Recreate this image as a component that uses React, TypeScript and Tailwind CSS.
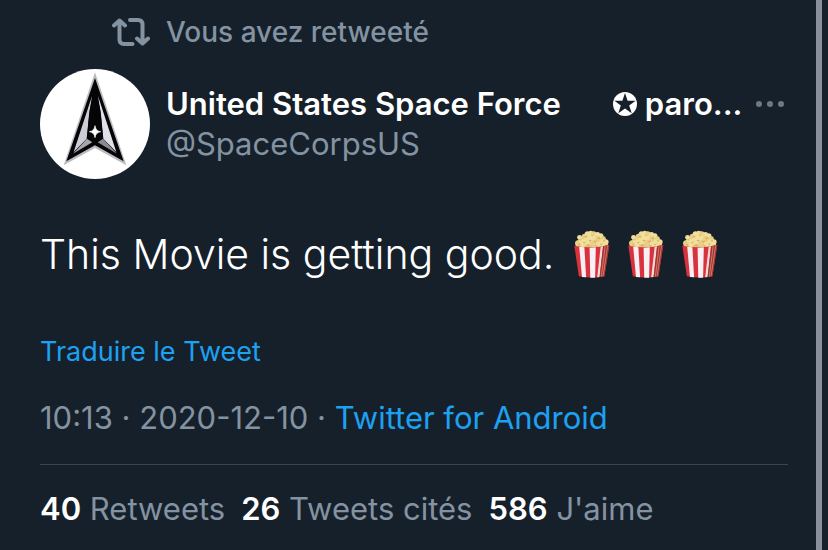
type IconProps = {
  className?: string;
};

type Stat = {
  count: number;
  label: string;
};

const stats: Stat[] = [
  { count: 40, label: 'Retweets' },
  { count: 26, label: 'Tweets cités' },
  { count: 586, label: "J'aime" },
];

const RetweetIcon = ({ className }: IconProps) => (
  <svg
    className={className}
    viewBox="0 0 38 28"
    fill="none"
    stroke="currentColor"
    strokeWidth="4"
    strokeLinecap="round"
    strokeLinejoin="round"
    aria-hidden="true"
  >
    <path d="M2 7.500 7.500 2.500 13 7.500M7.500 4V21.500Q7.500 26 12 26H20.500" />
    <path d="M18 2H26Q30.500 2 30.500 6.500V24M25 20.500 30.500 25.500 36 20.500" />
  </svg>
);

const SpaceForceLogo = ({ className }: IconProps) => (
  <svg className={className} viewBox="30 27 330 330" role="img" aria-label="United States Space Force">
    <circle cx="195" cy="192" r="165" fill="#fff" />
    <path d="M195 37 101 316 195 264 289 316Z" fill="#bcbbc0" />
    <path d="M195 54 109 304 195 256 281 304Z" fill="#050507" />
    <path d="M186 108 131 276 170 236 177 165Z" fill="#cdcdd8" />
    <path d="M204 108 259 276 220 236 213 165Z" fill="#e0e0ea" />
    <path d="M129 281 171 236 187 247Z" fill="#a5a5ad" />
    <path d="M261 281 219 236 203 247Z" fill="#8b8b93" />
    <path d="M195 80 179 150 171 235 195 249 219 235 211 150Z" fill="#050507" />
    <path d="M195 197Q197 213 212 215 197 217 195 233 193 217 178 215 193 213 195 197Z" fill="#fff" stroke="#fff" strokeWidth="2" />
  </svg>
);

const kernels = [
  [43, 70, 9], [54, 60, 9], [47, 52, 7], [62, 50, 9], [70, 42, 8], [79, 38, 6],
  [88, 42, 8], [99, 43, 7], [108, 48, 8], [116, 56, 7], [123, 66, 8], [112, 68, 10],
  [98, 57, 10], [82, 53, 11], [70, 64, 11], [88, 70, 11], [56, 73, 8], [102, 73, 8],
];

const flecks = [
  [50, 58], [61, 67], [66, 48], [77, 61], [84, 45], [93, 64], [103, 54], [110, 72], [118, 62], [47, 73], [72, 74], [96, 76],
];

const PopcornEmoji = ({ className }: IconProps) => (
  <svg className={className} viewBox="31 30 104 144" preserveAspectRatio="none" role="img" aria-label="Pop-corn">
    <path d="M36 76Q38 52 68 42L83 34 103 42Q126 52 130 76V86H36Z" fill="#dfc376" />
    {kernels.map(([x, y, r], i) => (
      <circle key={i} cx={x} cy={y} r={r} fill={i % 3 === 0 ? '#e8cf83' : '#f3df9c'} />
    ))}
    {flecks.map(([x, y], i) => (
      <path key={i} d={`M${x - 3} ${y}q3 4 6-1`} stroke="#b8873c" strokeWidth="2" fill="none" />
    ))}
    <path d="M32 77Q82 87 133 75L119 169Q84 176 45 169Z" fill="#d8323c" />
    <path d="M46 80 61 82 66 172 54 171Z" fill="#f6eef2" />
    <path d="M76 83 94 82 92 173 78 173Z" fill="#f8f0f4" />
    <path d="M108 80 115 79 105 171 98 172Z" fill="#f1d9d8" />
    <path d="M115 79 133 75 119 169 105 171Z" fill="#a82f32" />
    <path d="M121 78 110 170M128 77 115 169" stroke="#dca27e" strokeWidth="2" fill="none" />
  </svg>
);

const StarBadge = ({ className }: IconProps) => (
  <svg className={className} viewBox="0 0 24 24" aria-hidden="true">
    <circle cx="12" cy="12" r="12" fill="#fff" />
    <path d="m12 1 2.600 7.700h8L16.200 13.500l2.500 7.700L12 16.500l-6.700 4.700 2.500-7.700L1.400 8.700h8Z" fill="#16202b" />
  </svg>
);

const MoreIcon = ({ className }: IconProps) => (
  <svg className={className} viewBox="0 0 28 6" fill="currentColor" aria-hidden="true">
    <circle cx="3" cy="3" r="3" />
    <circle cx="14" cy="3" r="3" />
    <circle cx="25" cy="3" r="3" />
  </svg>
);

export default function App() {
  return (
    <div className="flex min-h-screen bg-[#16202b] pr-1.5 font-['Inter','Liberation_Sans',sans-serif] text-[#8493a1]">
      <article className="min-w-0 flex-1 pt-3 pr-7 pl-10">
        <div className="flex items-center pl-18 text-[28px] leading-10 font-medium">
          <RetweetIcon className="mr-4 h-7 w-[38px]" />
          Vous avez retweeté
        </div>

        <header className="mt-[17px] flex gap-4">
          <SpaceForceLogo className="size-[110px] shrink-0" />
          <div className="min-w-0 flex-1 pt-[15px] text-[31px] leading-10">
            <div className="flex items-center">
              <h1 className="flex min-w-0 items-center font-semibold whitespace-nowrap text-white">
                United States Space Force
                <StarBadge className="mr-2 ml-13 size-6 shrink-0" />
                paro...
              </h1>
              <button type="button" aria-label="Plus" className="mr-1 ml-auto shrink-0 text-[#6c7a87]">
                <MoreIcon className="w-7" />
              </button>
            </div>
            <p>@SpaceCorpsUS</p>
          </div>
        </header>

        <p className="mt-[47px] flex items-center text-[41px] leading-14 font-light text-white">
          This Movie is getting good.
          <span className="ml-5 flex gap-[18px]">
            <PopcornEmoji className="h-12 w-9" />
            <PopcornEmoji className="h-12 w-9" />
            <PopcornEmoji className="h-12 w-9" />
          </span>
        </p>

        <button type="button" className="mt-[50px] block text-[27px] leading-10 text-[#1da1f2]">
          Traduire le Tweet
        </button>

        <p className="mt-[26px] text-[31px] leading-10">
          10:13 · 2020-12-10 ·{' '}
          <a href="#source" className="text-[#1da1f2]">Twitter for Android</a>
        </p>

        <div className="mt-[26px] flex gap-4 border-t border-[#3a4550] pt-6 text-[31px] leading-10">
          {stats.map((stat) => (
            <a key={stat.label} href="#stats" className="whitespace-nowrap">
              <strong className="font-semibold text-white">{stat.count}</strong> {stat.label}
            </a>
          ))}
        </div>
      </article>
      <div className="w-1.5 shrink-0 bg-[#8b8f9b]" />
    </div>
  );
}
